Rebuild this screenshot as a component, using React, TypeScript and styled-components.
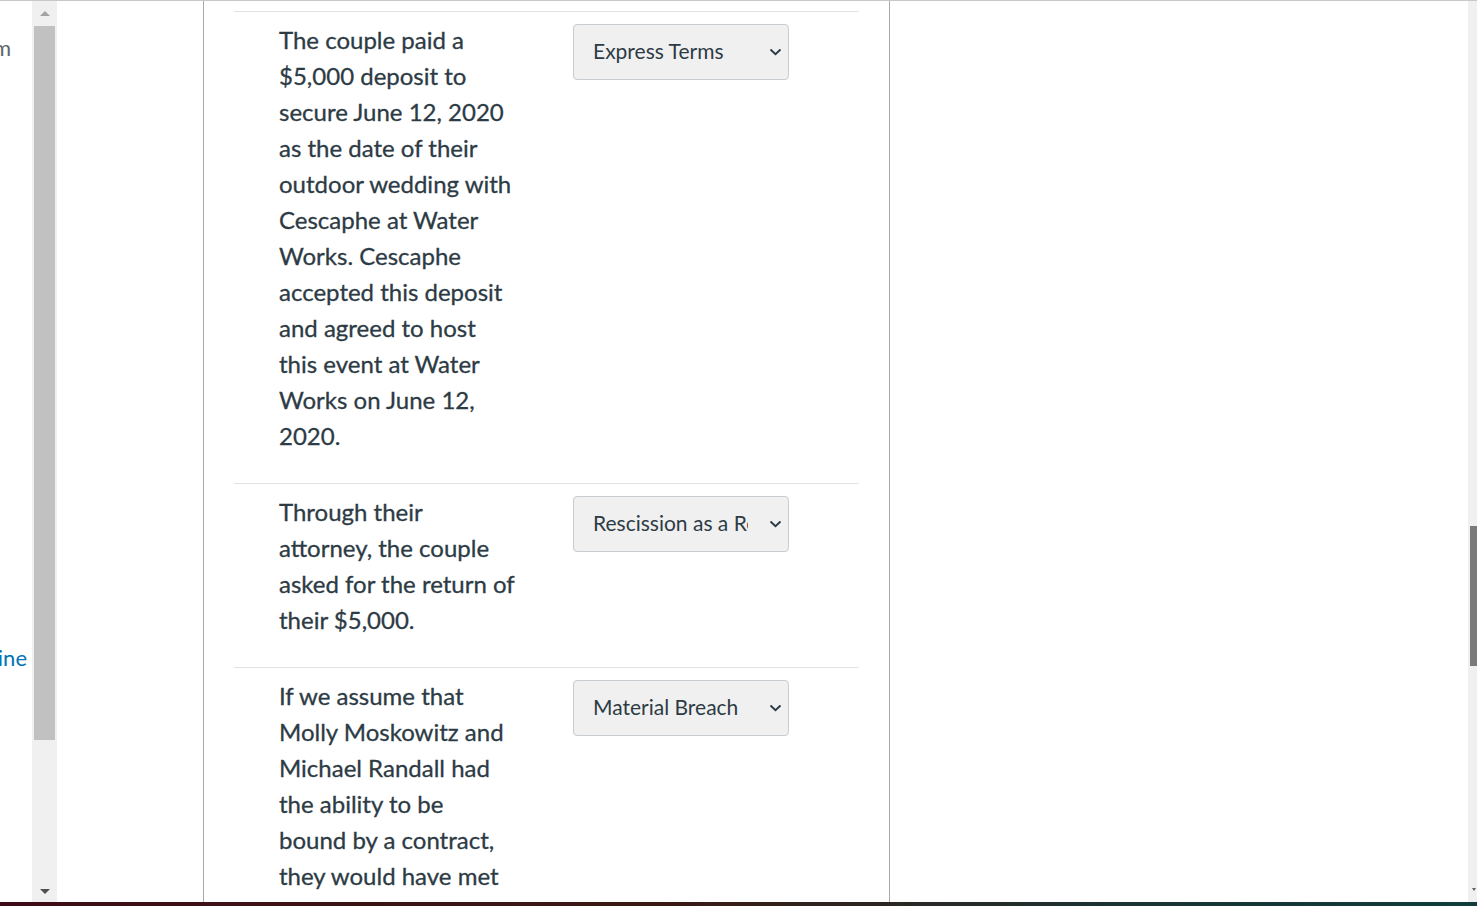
import React from 'react';
import styled, { createGlobalStyle } from 'styled-components';

const GlobalStyle = createGlobalStyle`
  html, body {
    margin: 0;
    padding: 0;
    background: #fff;
  }
  #root {
    height: 906px;
    overflow: hidden;
  }
`;

const Page = styled.div`
  display: flex;
  flex-direction: column;
  height: 906px;
  font-family: Lato, 'Liberation Sans', sans-serif;
  color: #2d3b45;
`;

const Frame = styled.div`
  display: flex;
  height: 901px;
  border-top: 1px solid #c8c8c8;
  overflow: hidden;
`;

const BottomBar = styled.div`
  height: 4px;
  background: linear-gradient(90deg, #3d0b17 0%, #3a1a14 45%, #1b3232 75%, #0f3c3c 100%);
`;

const SidePane = styled.div`
  width: 32px;
  overflow: hidden;
  display: flex;
  flex-direction: column;
  align-items: flex-end;
`;

const SideText = styled.span<{ $top: number; $right: number; $link?: boolean }>`
  margin-top: ${(p) => p.$top}px;
  margin-right: ${(p) => p.$right}px;
  white-space: nowrap;
  font-size: 22px;
  line-height: 24px;
  color: ${(p) => (p.$link ? '#0374b5' : '#5a6670')};
`;

const Track = styled.div<{ $w: number }>`
  width: ${(p) => p.$w}px;
  flex-shrink: 0;
  background: #f0f0f0;
  display: flex;
  flex-direction: column;
  align-items: center;
`;

const Arrow = styled.div<{ $up?: boolean; $color: string }>`
  width: 0;
  height: 0;
  border-left: 5px solid transparent;
  border-right: 5px solid transparent;
  ${(p) =>
    p.$up
      ? `border-bottom: 5px solid ${p.$color}; margin: 10px 0 10px;`
      : `border-top: 5px solid ${p.$color}; margin: auto 0 8px;`}
`;

const Thumb = styled.div<{ $w: number; $h: number; $color: string; $top?: number }>`
  width: ${(p) => p.$w}px;
  height: ${(p) => p.$h}px;
  margin-top: ${(p) => p.$top || 0}px;
  background: ${(p) => p.$color};
`;

const Gap = styled.div<{ $w: number }>`
  width: ${(p) => p.$w}px;
  flex-shrink: 0;
`;

const Main = styled.main`
  flex-shrink: 0;
  border-left: 1px solid #a9a9a9;
  border-right: 1px solid #a9a9a9;
  padding: 10px 30px 0;
  box-sizing: content-box;
  width: 625px;
`;

const Filler = styled.div`
  flex: 1;
`;

const RightTrack = styled.div`
  width: 9px;
  flex-shrink: 0;
  background: #f0f0f0;
  display: flex;
  flex-direction: column;
  align-items: flex-end;
`;

const SmallArrow = styled.div`
  margin: auto 1px 11px 0;
  width: 0;
  height: 0;
  border-left: 2px solid transparent;
  border-right: 2px solid transparent;
  border-top: 3px solid #606060;
`;

const Row = styled.div`
  display: grid;
  grid-template-columns: 237px 216px;
  column-gap: 57px;
  align-items: start;
  border-top: 1px solid #e3e3e3;
  padding: 10px 0 29px 45px;
`;

const Prompt = styled.p`
  margin: 0;
  font-size: 24px;
  line-height: 36px;
  color: #2d3b45;
  -webkit-text-stroke: 0.3px #2d3b45;
`;

const SelectWrap = styled.div`
  position: relative;
  margin-top: 2px;
`;

const Select = styled.select`
  appearance: none;
  -webkit-appearance: none;
  width: 216px;
  height: 56px;
  box-sizing: border-box;
  padding: 0 40px 3px 19px;
  border: 1px solid #c7cdd1;
  border-radius: 4px;
  background: #f0f0f0;
  font-family: Lato, 'Liberation Sans', sans-serif;
  font-size: 21px;
  color: #2d3b45;
  outline: none;
`;

const Chevron = styled.svg`
  position: absolute;
  right: 7px;
  top: 24px;
  pointer-events: none;
`;

type Item = { text: string; answer: string };

const items: Item[] = [
  {
    text: 'The couple paid a $5,000 deposit to secure June 12, 2020 as the date of their outdoor wedding with Cescaphe at Water Works. Cescaphe accepted this deposit and agreed to host this event at Water Works on June 12, 2020.',
    answer: 'Express Terms',
  },
  {
    text: 'Through their attorney, the couple asked for the return of their $5,000.',
    answer: 'Rescission as a Remedy',
  },
  {
    text: 'If we assume that Molly Moskowitz and Michael Randall had the ability to be bound by a contract, they would have met the requirement of capacity.',
    answer: 'Material Breach',
  },
];

const options = ['Express Terms', 'Rescission as a Remedy', 'Material Breach', 'Capacity'];

const App: React.FC = () => {
  return (
    <>
      <GlobalStyle />
      <Page>
        <Frame>
          <SidePane>
            <SideText $top={35} $right={21}>
              Zoom
            </SideText>
            <SideText $top={586} $right={5} $link>
              Outline
            </SideText>
          </SidePane>
          <Track $w={25}>
            <Arrow $up $color="#a3a3a3" />
            <Thumb $w={21} $h={714} $color="#c1c1c1" />
            <Arrow $color="#505050" />
          </Track>
          <Gap $w={146} />
          <Main>
            {items.map((item) => (
              <Row key={item.answer}>
                <Prompt>{item.text}</Prompt>
                <SelectWrap>
                  <Select defaultValue={item.answer}>
                    {options.map((o) => (
                      <option key={o}>{o}</option>
                    ))}
                  </Select>
                  <Chevron width="13" height="8" viewBox="0 0 13 8">
                    <path d="M1.5 1.5 L6.5 6.3 L11.5 1.5" fill="none" stroke="#2d3b45" strokeWidth="1.9" />
                  </Chevron>
                </SelectWrap>
              </Row>
            ))}
          </Main>
          <Filler />
          <RightTrack>
            <Thumb $w={7} $h={140} $color="#7a7a7a" $top={525} />
            <SmallArrow />
          </RightTrack>
        </Frame>
        <BottomBar />
      </Page>
    </>
  );
};

export default App;
